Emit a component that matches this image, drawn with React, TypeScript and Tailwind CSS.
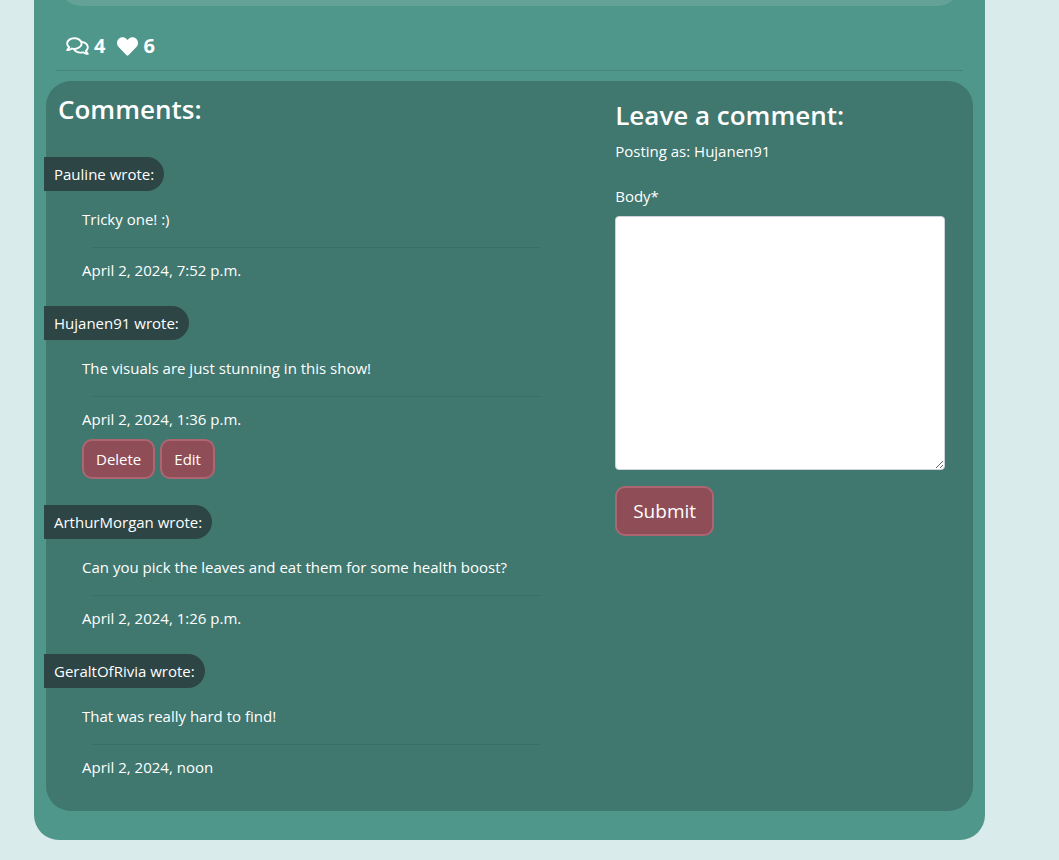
import React from "react";
import { FaHeart, FaRegComments } from "react-icons/fa";

type Comment = {
  author: string;
  body: string;
  date: string;
  own?: boolean;
};

const comments: Comment[] = [
  { author: "Pauline", body: "Tricky one! :)", date: "April 2, 2024, 7:52 p.m." },
  {
    author: "Hujanen91",
    body: "The visuals are just stunning in this show!",
    date: "April 2, 2024, 1:36 p.m.",
    own: true,
  },
  {
    author: "ArthurMorgan",
    body: "Can you pick the leaves and eat them for some health boost?",
    date: "April 2, 2024, 1:26 p.m.",
  },
  { author: "GeraltOfRivia", body: "That was really hard to find!", date: "April 2, 2024, noon" },
];

const buttonColors = "rounded-[10px] border-2 border-[#ad6671] bg-[#8f4d57] text-white";

function CommentItem({ author, body, date, own }: Comment) {
  return (
    <li className="pb-6">
      <h3 className="-ml-0.5 w-fit rounded-r-full bg-[#2d4545] px-2.5 py-[5px]">{author} wrote:</h3>
      <div className="mt-4 mr-[61px] ml-9">
        <p>{body}</p>
        <hr className="mt-4 mb-2.5 ml-2.5 border-[#3b6e66]" />
        <p>{date}</p>
        {own && (
          <div className="mt-2 mb-0.5 flex gap-[5px]">
            <button type="button" className={`h-10 px-3 ${buttonColors}`}>
              Delete
            </button>
            <button type="button" className={`h-10 px-3 ${buttonColors}`}>
              Edit
            </button>
          </div>
        )}
      </div>
    </li>
  );
}

export default function App() {
  return (
    <div className="min-h-screen bg-[#d9ebea] pr-[74px] pl-[34px] font-['Open_Sans','Noto_Sans',sans-serif] text-[15px] leading-6 text-white">
      <main className="rounded-b-[25px] bg-[#50978b] px-3 pb-[29px]">
        <div className="mx-3 flex h-1.5 items-end overflow-hidden">
          <div className="h-12 w-full shrink-0 rounded-b-[24px] bg-[#64a298]" />
        </div>
        <div className="mt-7 flex items-center gap-3 px-5 text-[20px] leading-6 font-bold">
          <span className="flex items-center gap-[5px]">
            <FaRegComments className="h-5 w-[23px]" aria-label="Comments" />4
          </span>
          <span className="flex items-center gap-[5px]">
            <FaHeart className="h-[21px] w-[21px]" aria-label="Likes" />6
          </span>
        </div>
        <hr className="mx-2.5 mt-3 mb-2.5 border-[#468478]" />

        <div className="grid grid-cols-[3fr_2fr] rounded-[25px] bg-[#40776f]">
          <section className="pb-2">
            <h2 className="px-3 pt-3 pb-8 text-[26px] leading-8 font-semibold">Comments:</h2>
            <ul>
              {comments.map((c) => (
                <CommentItem key={c.author} {...c} />
              ))}
            </ul>
          </section>

          <section className="pt-[18px] pr-7 pl-[13px]">
            <h2 className="text-[26px] leading-8 font-semibold">Leave a comment:</h2>
            <p className="mt-2">Posting as: Hujanen91</p>
            <form className="mt-[21px]" onSubmit={(e) => e.preventDefault()}>
              <label htmlFor="body" className="block">
                Body*
              </label>
              <textarea
                id="body"
                required
                className="mt-2 block h-[254px] w-full resize rounded border border-[#ced4da] bg-white px-3 py-1.5 text-[#212529] shadow-none outline-none"
              />
              <button type="submit" className={`mt-4 h-[50px] px-4 text-[19px] ${buttonColors}`}>
                Submit
              </button>
            </form>
          </section>
        </div>
      </main>
    </div>
  );
}
